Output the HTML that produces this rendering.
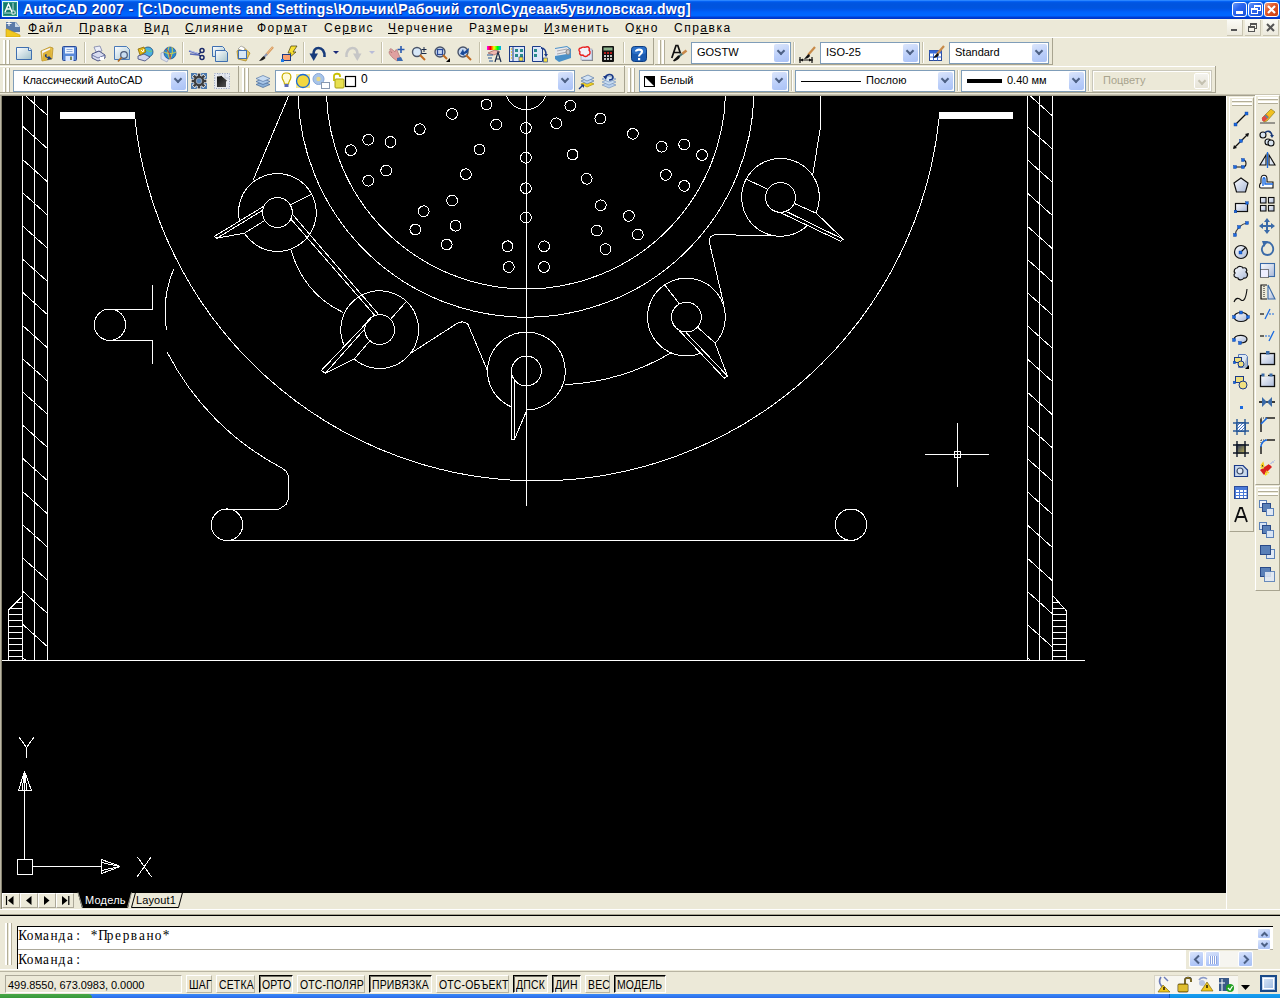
<!DOCTYPE html><html><head><meta charset="utf-8"><style>
*{box-sizing:border-box}
html,body{margin:0;padding:0}
body{width:1280px;height:998px;overflow:hidden;position:relative;background:#ECE9D8;font-family:"Liberation Sans",sans-serif;font-size:11px;color:#000}
.a{position:absolute}
svg.a{overflow:visible}
.combo{position:absolute;border:1px solid #7f9db9;white-space:pre;overflow:hidden}
.ct{position:absolute;top:3px;font-size:11px;line-height:13px}
.dd{position:absolute;right:1px;top:1px;width:15px;bottom:1px;border-radius:2px;background:linear-gradient(160deg,#dce6fb,#b9cdf9 60%,#aac2f6)}
.dd:after{content:"";position:absolute;left:4px;top:4px;width:4px;height:4px;border-right:2px solid #4d6185;border-bottom:2px solid #4d6185;transform:rotate(45deg)}
.dd.dis{background:linear-gradient(#f4f3ee,#e6e3d6);border:1px solid #fff;right:2px;top:2px;bottom:2px}
.dd.dis:after{border-color:#c4c1b0}
.gv{position:absolute;width:3px;border-left:2px solid #fff;border-right:1px solid #b3ae98}
.sv{position:absolute;width:2px;border-left:1px solid #c5c1ab;border-right:1px solid #fff}
.tbe{position:absolute;border-right:1px solid #a8a490;border-bottom:1px solid #a8a490}
.mi u{text-decoration:underline;text-underline-offset:1px;text-decoration-thickness:1px}
.mi{position:absolute;top:21px;font-size:12px;letter-spacing:1.5px;line-height:14px;white-space:pre}
.ub{position:absolute;width:1px;height:10px;background:#000}
.sb{position:absolute;top:975px;height:18px;font-size:12px;line-height:15px;padding-top:1px;text-align:center;white-space:pre;letter-spacing:0.2px}
.sb.up{border-top:1px solid #fff;border-left:1px solid #fff;border-right:1px solid #b8b4a0;border-bottom:1px solid #b8b4a0}
.sb.dn{border-top:1px solid #000;border-left:1px solid #000;border-right:1px solid #fff;border-bottom:1px solid #fff;box-shadow:inset 1px 1px 0 #716f64;padding-top:1px}
</style></head><body><div class="a" style="left:0;top:0;width:1280px;height:19px;background:linear-gradient(#4a9eff 0px,#0a6cff 1px,#0058e8 2px,#0054df 4px,#0055df 8px,#0058ee 10px,#0062fb 12px,#0066ff 14px,#0066ff 16px,#003fd6 17px,#0035c8 19px)"></div><div class="a" style="left:0;top:0;width:1px;height:19px;background:#0030b8"></div><svg class="a" style="left:2px;top:1px" width="16" height="16" viewBox="0 0 16 16"><rect x="0.5" y="0.5" width="15" height="15" fill="#2a9a88" stroke="#e8fff8"/><rect x="2" y="2" width="12" height="12" fill="#1a7a6a"/><path d="M3 11L6.5 3L10 11M4.5 8H8.5" stroke="#fff" stroke-width="1.4" fill="none"/><path d="M11 2V14M2 12H14" stroke="#dff" stroke-width="0.8"/><rect x="10" y="10" width="3" height="3" fill="#1a7a6a" stroke="#fff" stroke-width="0.8"/></svg><div class="a" style="left:23px;top:1px;color:#fff;font-weight:bold;font-size:14px;letter-spacing:0.33px;text-shadow:1px 1px 0 #0a2a9a;white-space:pre;line-height:17px">AutoCAD 2007 - [C:\Documents and Settings\Юльчик\Рабочий стол\Судеаак5увиловская.dwg]</div><div class="a" style="left:1232px;top:2px;width:15px;height:15px;border:1px solid #fff;border-radius:3px;background:linear-gradient(135deg,#6a9af8,#2a66f0 40%,#1850d8)"></div><div class="a" style="left:1248px;top:2px;width:15px;height:15px;border:1px solid #fff;border-radius:3px;background:linear-gradient(135deg,#6a9af8,#2a66f0 40%,#1850d8)"></div><div class="a" style="left:1264px;top:2px;width:15px;height:15px;border:1px solid #fff;border-radius:3px;background:linear-gradient(135deg,#f0a080,#e05828 40%,#c83c10)"></div><div class="a" style="left:1236px;top:11px;width:7px;height:3px;background:#fff"></div><div class="a" style="left:1254px;top:5px;width:7px;height:6px;border:1px solid #fff;border-top-width:2px"></div><div class="a" style="left:1251px;top:8px;width:7px;height:6px;border:1px solid #fff;border-top-width:2px;background:#2a62e8"></div><svg class="a" style="left:1264px;top:2px" width="15" height="15"><path d="M4 4L11 11M11 4L4 11" stroke="#fff" stroke-width="2.2"/></svg><div class="a" style="left:0;top:19px;width:1280px;height:1px;background:#fbf6e2"></div><svg class="a" style="left:5px;top:20px" width="16" height="17" viewBox="0 0 16 17"><path d="M1 2H11L15 7V12H1Z" fill="#5a7aa8"/><path d="M10 2L15 7H10Z" fill="#c8d8e8"/><path d="M2 9L15 15V17H1V9Z" fill="#f0c820" stroke="#c89810" stroke-width="0.6"/><path d="M4 1V6M1.5 3.5H6.5" stroke="#fff" stroke-width="1"/></svg><span class="mi" style="left:28px"><u>Ф</u>айл</span><span class="mi" style="left:79px"><u>П</u>равка</span><span class="mi" style="left:144px"><u>В</u>ид</span><span class="mi" style="left:185px"><u>С</u>лияние</span><span class="mi" style="left:257px">Фор<u>м</u>ат</span><span class="mi" style="left:324px">Се<u>р</u>вис</span><span class="mi" style="left:388px"><u>Ч</u>ерчение</span><span class="mi" style="left:469px">Ра<u>з</u>меры</span><span class="mi" style="left:544px"><u>И</u>зменить</span><span class="mi" style="left:625px">О<u>к</u>но</span><span class="mi" style="left:674px">Спр<u>а</u>вка</span><div class="a" style="left:1227px;top:20px;width:16px;height:16px;background:linear-gradient(#fbfbf6,#ece9dc);border-right:1px solid #c9c5b2;border-bottom:1px solid #c9c5b2"></div><div class="a" style="left:1245px;top:20px;width:16px;height:16px;background:linear-gradient(#fbfbf6,#ece9dc);border-right:1px solid #c9c5b2;border-bottom:1px solid #c9c5b2"></div><div class="a" style="left:1263px;top:20px;width:16px;height:16px;background:linear-gradient(#fbfbf6,#ece9dc);border-right:1px solid #c9c5b2;border-bottom:1px solid #c9c5b2"></div><div class="a" style="left:1231px;top:29px;width:6px;height:2px;background:#555"></div><div class="a" style="left:1250px;top:23px;width:7px;height:6px;border:1px solid #555;border-top-width:2px"></div><div class="a" style="left:1248px;top:26px;width:7px;height:6px;border:1px solid #555;border-top-width:2px;background:#f4f2ea"></div><svg class="a" style="left:1263px;top:20px" width="16" height="16"><path d="M4 4L11 11M11 4L4 11" stroke="#555" stroke-width="2"/></svg><div class="a" style="left:0;top:37px;width:1280px;height:1px;background:#fff"></div><div class="tbe" style="left:0;top:38px;width:654px;height:27px"></div><div class="tbe" style="left:655px;top:38px;width:398px;height:27px"></div><div class="gv" style="left:3px;top:40px;height:24px"></div><div class="gv" style="left:7px;top:40px;height:24px"></div><svg class="a" style="left:16px;top:46px" width="16" height="16" viewBox="0 0 16 16"><defs><linearGradient id="gnew" x1="0" y1="0" x2="1" y2="1"><stop offset="0" stop-color="#fff"/><stop offset="1" stop-color="#9fbfca"/></linearGradient></defs><path d="M0.5 1.5H13L15.5 4V13.5H0.5Z" fill="url(#gnew)" stroke="#3f6fb0"/><path d="M12.5 1.5V4.5H15.5" fill="#fff" stroke="#3f6fb0"/></svg><svg class="a" style="left:39px;top:46px" width="16" height="16" viewBox="0 0 16 16"><path d="M2 5L11 1L14 2L13 13L3 15Z" fill="#e8c04a" stroke="#b8902a" stroke-width="0.8"/><path d="M3 5L11 2L12 9L4 12Z" fill="#f6f6ff"/><path d="M4 7L12 3L13 12L4 15Z" fill="#ddb23a"/><path d="M7 8C5 9 6 12 9 12L8 14L13 13L10 10L9 11C7 11 7 9 8 9Z" fill="#1a3a7a"/></svg><svg class="a" style="left:62px;top:46px" width="16" height="16" viewBox="0 0 16 16"><rect x="0.5" y="0.5" width="14" height="14" rx="1" fill="#5a8ad8" stroke="#2a4a98"/><rect x="3" y="1.5" width="9" height="6" fill="#eef4ff"/><path d="M4.5 3.5H10.5M4.5 5.5H10.5" stroke="#7a9ad0" stroke-width="0.8"/><rect x="3.5" y="10" width="8" height="5" fill="#dde8ff"/><rect x="8" y="10.5" width="2" height="3.5" fill="#7a8a5a"/></svg><svg class="a" style="left:91px;top:46px" width="16" height="16" viewBox="0 0 16 16"><path d="M3 1L9 0L11 5L5 6Z" fill="#eceef8" stroke="#7a82a8" stroke-width="0.8"/><path d="M1 8L8 5L14 9L14 12L7 15L1 12Z" fill="#d8dcf0" stroke="#3a4478" stroke-width="0.9"/><path d="M1 9L7 12L14 9" fill="none" stroke="#5a6498" stroke-width="0.8"/><rect x="9" y="11" width="4" height="3" fill="#fff"/></svg><svg class="a" style="left:114px;top:46px" width="16" height="16" viewBox="0 0 16 16"><defs><linearGradient id="gpv" x1="0" y1="0" x2="1" y2="1"><stop offset="0" stop-color="#fff"/><stop offset="1" stop-color="#a8c6d4"/></linearGradient></defs><path d="M0.5 0.5H12.5L15.5 3.5V13.5H0.5Z" fill="url(#gpv)" stroke="#4a7ab8"/><circle cx="10" cy="9" r="3.3" fill="#c8dcf0" stroke="#4a5a78" stroke-width="1.2"/><path d="M7.5 11.5L4 15.5" stroke="#b06a20" stroke-width="1.8"/></svg><svg class="a" style="left:137px;top:46px" width="16" height="16" viewBox="0 0 16 16"><circle cx="11" cy="6" r="5" fill="#4ab0e0" stroke="#1a4a78" stroke-width="0.8"/><path d="M8 3C10 5 13 6 15 5" stroke="#7ad060" fill="none"/><path d="M1 10L7 8L13 11L8 15L1 13Z" fill="#d0d6ee" stroke="#3a4478" stroke-width="0.8"/><path d="M1 3L7 1L9 6L3 9Z" fill="#e0b818" stroke="#8a6a08" stroke-width="0.8"/><path d="M4 4L6 6L7 3" stroke="#fff" fill="none"/></svg><svg class="a" style="left:160px;top:46px" width="16" height="16" viewBox="0 0 16 16"><path d="M1 7L7 5L9 12L7 16L1 13Z" fill="#dde2f2" stroke="#9aa2c0" stroke-width="0.7"/><circle cx="10" cy="7" r="6" fill="#2a8ad0" stroke="#1a4a88" stroke-width="0.7"/><path d="M4 6C8 8 12 8 16 6M9 1C7 6 8 10 10 13M12 1C13 5 12 10 10 13" stroke="#e8d838" fill="none" stroke-width="0.9"/><path d="M6 3C9 6 11 9 10 13" stroke="#d03a2a" fill="none" stroke-width="1"/></svg><svg class="a" style="left:189px;top:46px" width="16" height="16" viewBox="0 0 16 16"><path d="M0 5L10 8M1 8L10 9" stroke="#5a6ab8" stroke-width="1.4"/><path d="M0.5 4.5L9 7.5" stroke="#c8d0f0" stroke-width="0.8"/><circle cx="13" cy="4.5" r="2" fill="none" stroke="#1a2a6a" stroke-width="1.5"/><circle cx="13" cy="11.5" r="2" fill="none" stroke="#1a2a6a" stroke-width="1.5"/><path d="M10 8L12 6M10 9L12 10" stroke="#1a2a6a" stroke-width="1.3"/></svg><svg class="a" style="left:212px;top:46px" width="16" height="16" viewBox="0 0 16 16"><defs><linearGradient id="gcp" x1="0" y1="0" x2="1" y2="1"><stop offset="0" stop-color="#fff"/><stop offset="1" stop-color="#a6c4cc"/></linearGradient></defs><path d="M0.5 0.5H10.5L12.5 2.5V10.5H0.5Z" fill="url(#gcp)" stroke="#3f6fb0"/><path d="M3.5 4.5H13.5L15.5 6.5V15.5H3.5Z" fill="url(#gcp)" stroke="#3f6fb0"/></svg><svg class="a" style="left:235px;top:46px" width="16" height="16" viewBox="0 0 16 16"><path d="M2 5L8 1L15 7L11 15L3 13Z" fill="#e8c85a" stroke="#a8882a" stroke-width="0.8"/><path d="M3 3L6 0L10 2L9 5Z" fill="#fff" stroke="#888" stroke-width="0.6"/><rect x="3.5" y="4.5" width="8" height="8" fill="#d8e8f4" stroke="#3f6fb0"/></svg><svg class="a" style="left:258px;top:46px" width="16" height="16" viewBox="0 0 16 16"><path d="M15 1L8 9" stroke="#d89858" stroke-width="2.4"/><path d="M14.5 1.2L8 9" stroke="#f0c8a0" stroke-width="0.8"/><path d="M9 8L6 11" stroke="#8a98b8" stroke-width="2"/><path d="M6 10C4 11 2 14 1 15C3 15 6 14 7.5 12Z" fill="#1a1a1a"/></svg><svg class="a" style="left:281px;top:46px" width="16" height="16" viewBox="0 0 16 16"><path d="M10 0H16L12 6H15L8 12L10 7H7Z" fill="#f8e030" stroke="#403810" stroke-width="0.7"/><rect x="1.5" y="8.5" width="8" height="6" fill="#f8a070" stroke="#1a3a88"/><rect x="0" y="13" width="3" height="3" fill="#1a7ae8"/></svg><svg class="a" style="left:310px;top:46px" width="16" height="16" viewBox="0 0 16 16"><path d="M14.5 11C15 5 12 2 8.5 2C5 2 3.5 5 3.5 8" stroke="#173a7a" stroke-width="2.6" fill="none"/><path d="M-0.5 7.5H8L3.7 15Z" fill="#173a7a"/></svg><svg class="a" style="left:345px;top:46px" width="16" height="16" viewBox="0 0 16 16"><path d="M1.5 11C1 5 4 2 7.5 2C11 2 12.5 5 12.5 8" stroke="#c6c6c6" stroke-width="2.6" fill="none"/><path d="M16.5 7.5H8L12.3 15Z" fill="#c6c6c6"/></svg><svg class="a" style="left:388px;top:46px" width="16" height="16" viewBox="0 0 16 16"><path d="M2 3C3 2 5 4 7 6C7 4 8 3 9 4L11 9L13 13L9 15L5 12C3 10 1 8 1 6C1 5 2 5 4 7C3 5 1 4 2 3Z" fill="#e0a0a0" stroke="#a86a6a" stroke-width="0.6"/><path d="M9 12L13 11L15 15H9Z" fill="#3a6ab0"/><path d="M13 0V7M9.5 3.5H16.5" stroke="#2a5ab0" stroke-width="1.6"/></svg><svg class="a" style="left:411px;top:46px" width="16" height="16" viewBox="0 0 16 16"><circle cx="6" cy="6" r="4.5" fill="#d8e8f8" stroke="#4a5468" stroke-width="1.4"/><path d="M9 9L14 14" stroke="#c06a20" stroke-width="2"/><path d="M13 1V6M10.5 3.5H15.5M10.5 7.5H15.5" stroke="#1a2a48" stroke-width="1"/></svg><svg class="a" style="left:434px;top:46px" width="16" height="16" viewBox="0 0 16 16"><circle cx="6" cy="6" r="5" fill="#c8d8f0" stroke="#4a5468" stroke-width="1.4"/><rect x="3.5" y="3.5" width="5" height="5" fill="none" stroke="#2a4a98" stroke-width="1.2"/><path d="M9 9L13 13" stroke="#c06a20" stroke-width="2"/><path d="M16 12V16H12Z" fill="#000"/></svg><svg class="a" style="left:457px;top:46px" width="16" height="16" viewBox="0 0 16 16"><circle cx="6" cy="6" r="5" fill="#c8d8f0" stroke="#4a5468" stroke-width="1.4"/><path d="M3 8L6 3L7 6L12 2C12 5 10 8 7 8L8 10Z" fill="#1a4a98"/><path d="M9 9L14 14" stroke="#c06a20" stroke-width="2"/></svg><svg class="a" style="left:486px;top:46px" width="16" height="16" viewBox="0 0 16 16"><rect x="1" y="0" width="14" height="4" fill="url(#grain)"/><defs><linearGradient id="grain"><stop offset="0" stop-color="#f0f"/><stop offset=".25" stop-color="#f00"/><stop offset=".5" stop-color="#ff0"/><stop offset=".75" stop-color="#0f0"/><stop offset="1" stop-color="#0af"/></linearGradient></defs><path d="M2 7L9 4L14 6L8 9Z" fill="#f0b8b0" stroke="#8a4a4a" stroke-width="0.6"/><path d="M1 9H7M2 12H6M3 15H7" stroke="#2a5a98" stroke-width="1.2"/><path d="M9 16L12 6L15 16M10 13H14" stroke="#1a2a48" stroke-width="1.2" fill="none"/></svg><svg class="a" style="left:509px;top:46px" width="16" height="16" viewBox="0 0 16 16"><rect x="0.5" y="0.5" width="15" height="15" fill="#dde6f8" stroke="#1a3a88"/><path d="M4 1V15" stroke="#1a3a88"/><path d="M2 3H3M2 6H3M2 9H3M2 12H3" stroke="#e8c020" stroke-width="1.4"/><rect x="6" y="3" width="3" height="3" fill="#2a8a8a"/><rect x="11" y="3" width="3" height="3" fill="#2a8a8a"/><rect x="6" y="8" width="3" height="3" fill="#2a8a8a"/><rect x="11" y="8" width="3" height="3" fill="#2a8a8a"/><rect x="10" y="11" width="4" height="4" fill="#f8e040" stroke="#1a3a88" stroke-width="0.6"/></svg><svg class="a" style="left:532px;top:46px" width="16" height="16" viewBox="0 0 16 16"><path d="M0.5 0.5H8.5L10.5 2.5V15.5H0.5Z" fill="#dde6f8" stroke="#1a3a88"/><rect x="2" y="3" width="3" height="3" fill="#2a8a8a"/><rect x="2" y="8" width="3" height="3" fill="#2a8a8a"/><path d="M9 2C12 2 14 4 14 9" stroke="#1a3a88" fill="none" stroke-width="1.4"/><path d="M12 8L14 11L16 8Z" fill="#1a3a88"/><rect x="11.5" y="12" width="4" height="4" fill="#f8e040" stroke="#1a3a88" stroke-width="0.6"/></svg><svg class="a" style="left:555px;top:46px" width="16" height="16" viewBox="0 0 16 16"><path d="M0 2L12 0L16 3V12L4 16L0 13Z" fill="#4a90c8"/><path d="M0 3L12 1L15 4L12 8L0 10Z" fill="#e8e8ea"/><path d="M2 5L12 3M2 8L12 6" stroke="#a8a8b0" stroke-width="1"/><ellipse cx="13" cy="6" rx="2" ry="2.5" fill="#c8c8cc" stroke="#888"/></svg><svg class="a" style="left:578px;top:46px" width="16" height="16" viewBox="0 0 16 16"><rect x="4" y="4" width="11" height="11" fill="#888"/><rect x="3" y="3" width="11" height="11" fill="#dde6f8" stroke="#8a94b0" stroke-width="0.6"/><path d="M3 2C5 0 7 2 8 1C11 0 12 3 11 4C13 6 12 9 10 9C9 11 6 11 5 9C2 10 1 7 2 6C0 4 1 2 3 2Z" fill="#f0f0f8" stroke="#e82020" stroke-width="1.4"/></svg><svg class="a" style="left:601px;top:46px" width="16" height="16" viewBox="0 0 16 16"><rect x="1" y="0" width="12" height="16" rx="1" fill="#101010"/><rect x="2.5" y="1.5" width="9" height="3" fill="#8ab08a"/><path d="M3 7H5M6 7H8M9 7H11" stroke="#e82020" stroke-width="1.6"/><path d="M3 10H5M6 10H8M9 10H11M3 13H5M6 13H8M9 13H11" stroke="#fff" stroke-width="1.6"/></svg><svg class="a" style="left:631px;top:46px" width="16" height="16" viewBox="0 0 16 16"><rect x="0.5" y="0.5" width="15" height="15" rx="3" fill="#1a5ab0" stroke="#0a3a80"/><rect x="1" y="1" width="14" height="7" rx="3" fill="#3a80d8" opacity=".6"/><path d="M5 5.5C5 3 11 3 11 5.5C11 8 8 8 8 10.5" stroke="#fff" stroke-width="2.2" fill="none"/><rect x="7" y="12" width="2.2" height="2.2" fill="#fff"/></svg><div class="sv" style="left:84px;top:42px;height:21px"></div><div class="sv" style="left:182px;top:42px;height:21px"></div><div class="sv" style="left:303px;top:42px;height:21px"></div><div class="sv" style="left:381px;top:42px;height:21px"></div><div class="sv" style="left:479px;top:42px;height:21px"></div><div class="sv" style="left:623px;top:42px;height:21px"></div><svg class="a" style="left:333px;top:51px" width="7" height="4"><path d="M0 0H6L3 3Z" fill="#1a2a78"/></svg><svg class="a" style="left:369px;top:51px" width="7" height="4"><path d="M0 0H6L3 3Z" fill="#b8bcd8"/></svg><div class="gv" style="left:658px;top:40px;height:24px"></div><div class="gv" style="left:662px;top:40px;height:24px"></div><svg class="a" style="left:670px;top:46px" width="16" height="16" viewBox="0 0 16 16"><path d="M1.8 12L6 -0.5H7.8L10.5 7.5M3.8 6.5H10" stroke="#101010" stroke-width="1.7" fill="none"/><path d="M16.5 4.5L12 8" stroke="#c88848" stroke-width="2.6"/><path d="M12.3 7.8L9 10.5" stroke="#4a7a7a" stroke-width="2"/><path d="M9.5 9.5L8 9.5L3 14.5L4 15.5C6.5 15 9 13 10 11Z" fill="#101010"/></svg><div class="combo" style="left:691px;top:42px;width:100px;height:22px;background:#fff;border-color:#7f9db9"><span class="ct" style="left:5px;color:#000">GOSTW</span><div class="dd"></div></div><div class="sv" style="left:793px;top:42px;height:21px"></div><svg class="a" style="left:799px;top:46px" width="16" height="16" viewBox="0 0 16 16"><path d="M0 14H14M1 11V17M13 11V17" stroke="#101010" stroke-width="1.2"/><path d="M1 14L4 12.5V15.5ZM13 14L10 12.5V15.5Z" fill="#101010"/><path d="M16 1L9 9" stroke="#c88a48" stroke-width="2.2"/><path d="M10 8C8 9 6 12 5 13C7 13 10 12 11 10Z" fill="#101010"/></svg><div class="combo" style="left:820px;top:42px;width:100px;height:22px;background:#fff;border-color:#7f9db9"><span class="ct" style="left:5px;color:#000">ISO-25</span><div class="dd"></div></div><div class="sv" style="left:922px;top:42px;height:21px"></div><svg class="a" style="left:928px;top:46px" width="16" height="16" viewBox="0 0 16 16"><rect x="1.5" y="4.5" width="12" height="10" fill="#fff" stroke="#2a4a98"/><rect x="1.5" y="4.5" width="12" height="3" fill="#3a6ad8"/><path d="M5.5 7.5V14.5M9.5 7.5V14.5M1.5 11H13.5" stroke="#3a6ad8"/><path d="M16 0L9 8" stroke="#c88a48" stroke-width="2.2"/><path d="M10 7C8 8 6 11 5 12C7 12 10 11 11 9Z" fill="#101010"/></svg><div class="combo" style="left:949px;top:42px;width:100px;height:22px;background:#fff;border-color:#7f9db9"><span class="ct" style="left:5px;color:#000">Standard</span><div class="dd"></div></div><div class="a" style="left:0;top:66px;width:1216px;height:1px;background:#fff"></div><div class="tbe" style="left:0;top:66px;width:239px;height:27px"></div><div class="tbe" style="left:239px;top:66px;width:386px;height:27px"></div><div class="tbe" style="left:627px;top:66px;width:589px;height:27px"></div><div class="gv" style="left:3px;top:68px;height:24px"></div><div class="gv" style="left:7px;top:68px;height:24px"></div><div class="combo" style="left:13px;top:70px;width:175px;height:22px;background:#fff;border-color:#7f9db9"><span class="ct" style="left:9px;color:#000">Классический AutoCAD</span><div class="dd"></div></div><svg class="a" style="left:191px;top:73px" width="16" height="16" viewBox="0 0 16 16"><rect x="0" y="0" width="16" height="16" fill="#4a78ac"/><path d="M15.43 6.42 L15.43 9.58 L13.27 9.17 L12.55 10.90 L14.37 12.14 L12.14 14.37 L10.90 12.55 L9.17 13.27 L9.58 15.43 L6.42 15.43 L6.83 13.27 L5.10 12.55 L3.86 14.37 L1.63 12.14 L3.45 10.90 L2.73 9.17 L0.57 9.58 L0.57 6.42 L2.73 6.83 L3.45 5.10 L1.63 3.86 L3.86 1.63 L5.10 3.45 L6.83 2.73 L6.42 0.57 L9.58 0.57 L9.17 2.73 L10.90 3.45 L12.14 1.63 L14.37 3.86 L12.55 5.10 L13.27 6.83Z" fill="#fff" stroke="#fff" stroke-width="1.2"/><path d="M15.43 6.42 L15.43 9.58 L13.27 9.17 L12.55 10.90 L14.37 12.14 L12.14 14.37 L10.90 12.55 L9.17 13.27 L9.58 15.43 L6.42 15.43 L6.83 13.27 L5.10 12.55 L3.86 14.37 L1.63 12.14 L3.45 10.90 L2.73 9.17 L0.57 9.58 L0.57 6.42 L2.73 6.83 L3.45 5.10 L1.63 3.86 L3.86 1.63 L5.10 3.45 L6.83 2.73 L6.42 0.57 L9.58 0.57 L9.17 2.73 L10.90 3.45 L12.14 1.63 L14.37 3.86 L12.55 5.10 L13.27 6.83Z" fill="#3c3c3c"/><circle cx="8" cy="8" r="2.8" fill="#5a88bc" stroke="#ccc" stroke-width="0.6"/></svg><svg class="a" style="left:214px;top:73px" width="16" height="16" viewBox="0 0 16 16"><rect x="0" y="0" width="16" height="16" fill="#e4e8f0"/><path d="M0.5 0.5H15.5V15.5H0.5Z" fill="none" stroke="#9aa4b8" stroke-dasharray="1 1.5"/><path d="M5 0V16M11 0V16M0 5H16" stroke="#b8c0d0" stroke-width="0.7"/><defs><linearGradient id="ghm" x1="0" y1="0" x2="1" y2="1"><stop offset="0" stop-color="#0a0a0a"/><stop offset="1" stop-color="#5a5a5a"/></linearGradient></defs><path d="M2.5 14.5V3H4.5L7.5 2.5L14.5 8.5H12.5V14.5Z" fill="url(#ghm)" stroke="#fff" stroke-width="0.8"/></svg><div class="gv" style="left:242px;top:68px;height:24px"></div><div class="gv" style="left:246px;top:68px;height:24px"></div><svg class="a" style="left:255px;top:73px" width="16" height="16" viewBox="0 0 16 16"><path d="M1 11.5L8 8.5L15 11.5L8 14.5Z" fill="#8ab0d8" stroke="#4a6a98" stroke-width="0.7"/><path d="M1 8.5L8 5.5L15 8.5L8 11.5Z" fill="#a8c6e8" stroke="#4a6a98" stroke-width="0.7"/><path d="M1 5.5L8 2.5L15 5.5L8 8.5Z" fill="#c8dcf2" stroke="#5a7aa8" stroke-width="0.7"/></svg><div class="combo" style="left:275px;top:70px;width:300px;height:22px;background:#fff;border-color:#7f9db9"><svg class="a" style="left:4px;top:1px" width="90" height="17" viewBox="0 0 90 17"><path d="M5.5 1C2.5 1 1.5 4 2.5 7C3.5 9 4.5 10 4.5 12H8.5C8.5 10 9.5 9 10.5 7C11.5 4 10.5 1 7.5 1Z" fill="#fffbd8" stroke="#c8b000" stroke-width="1.2"/><rect x="4.5" y="12" width="4" height="3" fill="#5a6ab8"/><rect x="16" y="2" width="14" height="14" fill="#f0d840" opacity=".6"/><circle cx="23" cy="9" r="6.5" fill="#f2d840" stroke="#1a6ad8" stroke-width="1.3"/><circle cx="38.5" cy="7" r="5.5" fill="#a8c4e8" stroke="#88a8d8"/><circle cx="38.5" cy="7" r="2.2" fill="#e8d888"/><rect x="41.5" y="10.5" width="8" height="6" fill="#fff" stroke="#8898b0"/><path d="M54 9V4C54 1 60 1 60 4V5" stroke="#c8c000" stroke-width="1.8" fill="none"/><rect x="55" y="7" width="9" height="9" rx="1" fill="#e8e050" stroke="#a8a010"/><rect x="65.5" y="4.5" width="10" height="10" fill="#fff" stroke="#000" stroke-width="1.2"/></svg><span class="a" style="left:85px;top:2px;font-size:12px;line-height:13px">0</span><span class="ct" style="left:5px;color:#000"></span><div class="dd"></div></div><svg class="a" style="left:578px;top:73px" width="16" height="16" viewBox="0 0 16 16"><path d="M3 11L10 8L16 11L9 14Z" fill="#f0d020" stroke="#a89010" stroke-width="0.7"/><path d="M3 8L10 5L16 8L9 11Z" fill="#c0d4ec" stroke="#5a7aa8" stroke-width="0.7"/><path d="M3 5L10 2L16 5L9 8Z" fill="#d4e4f4" stroke="#5a7aa8" stroke-width="0.7"/><path d="M1 16L5 12" stroke="#1a3a88" stroke-width="1.4"/><path d="M2.5 11.5H6V15Z" fill="#1a3a88"/></svg><svg class="a" style="left:601px;top:73px" width="16" height="16" viewBox="0 0 16 16"><path d="M1 12L8 9L15 12L8 15Z" fill="#b8d0ec" stroke="#6a8ab8" stroke-width="0.6"/><path d="M1 9L8 6L15 9L8 12Z" fill="#c8dcf0" stroke="#6a8ab8" stroke-width="0.6"/><path d="M1 6L8 3L15 6L8 9Z" fill="#d8e8f4" stroke="#6a8ab8" stroke-width="0.6"/><path d="M4 5C5 1 11 0 12 4C12 6 10 7 8 7" stroke="#1a3a88" stroke-width="1.6" fill="none"/><path d="M2 3L5 7L6 3Z" fill="#1a3a88"/></svg><div class="gv" style="left:628px;top:68px;height:24px"></div><div class="gv" style="left:632px;top:68px;height:24px"></div><div class="combo" style="left:639px;top:70px;width:150px;height:22px;background:#fff;border-color:#7f9db9"><svg class="a" style="left:4px;top:5px" width="11" height="11"><rect x="0.5" y="0.5" width="10" height="10" fill="#fff" stroke="#000"/><path d="M0 0H11V11Z" fill="#000"/></svg><span class="ct" style="left:20px;color:#000">Белый</span><div class="dd"></div></div><div class="sv" style="left:791px;top:70px;height:21px"></div><div class="combo" style="left:795px;top:70px;width:160px;height:22px;background:#fff;border-color:#7f9db9"><div class="a" style="left:5px;top:10px;width:60px;height:1px;background:#000"></div><span class="ct" style="left:70px;color:#000">Послою</span><div class="dd"></div></div><div class="sv" style="left:957px;top:70px;height:21px"></div><div class="combo" style="left:961px;top:70px;width:125px;height:22px;background:#fff;border-color:#7f9db9"><div class="a" style="left:5px;top:8px;width:35px;height:4px;background:#000"></div><span class="ct" style="left:45px;color:#000">0.40 мм</span><div class="dd"></div></div><div class="sv" style="left:1088px;top:70px;height:21px"></div><div class="combo" style="left:1092px;top:70px;width:120px;height:22px;background:#ece9d8;border-color:#c9c7ba"><div class="a" style="left:0;top:0;right:0;bottom:0;border:1px solid #fff"></div><span class="ct" style="left:10px;color:#a8a48e">Поцвету</span><div class="dd dis"></div></div><div class="a" style="left:0;top:93px;width:1280px;height:3px;background:linear-gradient(#ece9d8 0px,#ece9d8 1px,#c8c4b2 1px,#c8c4b2 2px,#a5a18f 2px)"></div><div class="a" style="left:0;top:96px;width:1px;height:813px;background:#bcb8a5"></div><div class="a" style="left:1px;top:96px;width:1px;height:813px;background:#85816f"></div><div class="a" style="left:2px;top:96px;width:1224px;height:797px;background:#000;overflow:hidden"><svg width="1224" height="797" viewBox="2 96 1224 797" style="position:absolute;left:0;top:0" fill="none" stroke="#fff" stroke-width="1" shape-rendering="crispEdges"><path d="M22.5 96.0 L22.5 660.5"/><path d="M34.5 96.0 L34.5 660.5"/><path d="M47.5 96.0 L47.5 660.5"/><path d="M1027.5 96.0 L1027.5 660.5"/><path d="M1039.5 96.0 L1039.5 660.5"/><path d="M1052.5 96.0 L1052.5 660.5"/><path d="M25.8 96.0 L47.5 115.5"/><path d="M22.5 126.2 L47.5 148.7"/><path d="M22.5 159.4 L47.5 181.9"/><path d="M22.5 192.6 L47.5 215.1"/><path d="M22.5 225.8 L47.5 248.3"/><path d="M22.5 259.0 L47.5 281.5"/><path d="M22.5 292.2 L47.5 314.7"/><path d="M22.5 325.4 L47.5 347.9"/><path d="M22.5 358.6 L47.5 381.1"/><path d="M22.5 391.8 L47.5 414.3"/><path d="M22.5 425.0 L47.5 447.5"/><path d="M22.5 458.2 L47.5 480.7"/><path d="M22.5 491.4 L47.5 513.9"/><path d="M22.5 524.6 L47.5 547.1"/><path d="M22.5 557.8 L47.5 580.3"/><path d="M22.5 591.0 L47.5 613.5"/><path d="M22.5 624.2 L47.5 646.7"/><path d="M22.5 657.4 L25.9 660.5"/><path d="M1030.3 96.0 L1052.5 116.0"/><path d="M1027.5 126.7 L1052.5 149.2"/><path d="M1027.5 159.9 L1052.5 182.4"/><path d="M1027.5 193.1 L1052.5 215.6"/><path d="M1027.5 226.3 L1052.5 248.8"/><path d="M1027.5 259.5 L1052.5 282.0"/><path d="M1027.5 292.7 L1052.5 315.2"/><path d="M1027.5 325.9 L1052.5 348.4"/><path d="M1027.5 359.1 L1052.5 381.6"/><path d="M1027.5 392.3 L1052.5 414.8"/><path d="M1027.5 425.5 L1052.5 448.0"/><path d="M1027.5 458.7 L1052.5 481.2"/><path d="M1027.5 491.9 L1052.5 514.4"/><path d="M1027.5 525.1 L1052.5 547.6"/><path d="M1027.5 558.3 L1052.5 580.8"/><path d="M1027.5 591.5 L1052.5 614.0"/><path d="M1027.5 624.7 L1052.5 647.2"/><path d="M1027.5 657.9 L1030.4 660.5"/><path d="M2.0 660.5 L1085.0 660.5"/><path d="M8.5 660.5 L8.5 610.0 L22.5 595.8"/><path d="M15.9 602.5 L22.5 602.5"/><path d="M10.0 608.5 L22.5 608.5"/><path d="M8.5 614.5 L22.5 614.5"/><path d="M8.5 620.5 L22.5 620.5"/><path d="M8.5 626.5 L22.5 626.5"/><path d="M8.5 632.5 L22.5 632.5"/><path d="M8.5 638.5 L22.5 638.5"/><path d="M8.5 644.5 L22.5 644.5"/><path d="M8.5 650.5 L22.5 650.5"/><path d="M8.5 656.5 L22.5 656.5"/><path d="M1066.0 660.5 L1066.0 610.4 L1052.5 595.4"/><path d="M1052.5 602.5 L1058.9 602.5"/><path d="M1052.5 608.5 L1064.3 608.5"/><path d="M1052.5 614.5 L1066.0 614.5"/><path d="M1052.5 620.5 L1066.0 620.5"/><path d="M1052.5 626.5 L1066.0 626.5"/><path d="M1052.5 632.5 L1066.0 632.5"/><path d="M1052.5 638.5 L1066.0 638.5"/><path d="M1052.5 644.5 L1066.0 644.5"/><path d="M1052.5 650.5 L1066.0 650.5"/><path d="M1052.5 656.5 L1066.0 656.5"/><rect x="60" y="112" width="75" height="7" fill="#fff" stroke="none"/><rect x="939" y="112" width="74" height="7" fill="#fff" stroke="none"/><path d="M135.0 118.6 A404.17 404.17 0 0 0 939.0 118.6"/><circle cx="526.0" cy="89.5" r="199.5"/><circle cx="526.0" cy="89.2" r="228.0"/><circle cx="526.0" cy="89.0" r="20.7"/><path d="M526.5 96.0 L526.5 505.5"/><path d="M239.32 220.44 A38.9 38.9 0 1 1 244.46 233.19"/><circle cx="277.4" cy="212.5" r="14.9"/><path d="M344.40 345.95 A38.9 38.9 0 1 1 354.20 358.98"/><circle cx="379.7" cy="329.6" r="14.9"/><path d="M511.38 406.88 A38.9 38.9 0 1 1 526.11 409.90"/><circle cx="526.4" cy="371.0" r="14.9"/><path d="M700.12 353.50 A38.9 38.9 0 1 1 715.29 343.15"/><circle cx="686.4" cy="317.1" r="14.9"/><path d="M807.61 225.30 A38.9 38.9 0 1 1 816.09 213.11"/><circle cx="780.5" cy="197.4" r="14.9"/><path d="M311.5 194.2 L290.9 204.7"/><path d="M406.2 301.6 L390.7 319.2"/><path d="M664.4 284.5 L679.5 304.0"/><path d="M746.2 179.1 L767.4 189.1"/><path d="M263.6 206.4 L214.3 236.4 L216.9 238.2 L263.1 210.0"/><path d="M216.9 238.2 L244.6 233.1 L264.1 220.9"/><path d="M291.2 219.4 L374.4 315.0"/><path d="M292.6 214.5 L378.9 314.8"/><path d="M373.3 315.9 L321.4 370.4 L325.2 373.4 L365.2 328.5"/><path d="M325.2 373.4 L354.1 359.1 L370.3 340.3"/><path d="M511.7 370.8 L511.7 439.4 L514.4 439.4 L514.4 379.4"/><path d="M514.4 439.4 L526.1 411.9"/><path d="M679.1 330.5 L724.3 378.2 L727.5 376.1 L686.1 332.6"/><path d="M727.5 376.1 L714.9 342.8 L697.7 327.4"/><path d="M779.1 212.0 L840.9 241.3 L843.2 239.2 L786.1 211.4"/><path d="M843.2 239.2 L816.3 213.2 L794.3 203.5"/><path d="M288.6 96.0 L253.1 180.2"/><path d="M291.2 249.6 A93.60 93.60 0 0 0 342.9 312.3"/><path d="M411.1 353L457 323.5Q463 320 467.8 324L487.3 370.3"/><path d="M564.7 384.7 A233.60 233.60 0 0 0 671.7 352.5"/><path d="M724 305.3L709.5 243Q708.5 235 716.5 234.5L770.7 235.9"/><path d="M820.4 96.0 L820.4 127.6 L812.8 174.6"/><circle cx="109.9" cy="324.7" r="15.7"/><path d="M107.0 309.5 L152.5 309.5 L152.5 285.0"/><path d="M107.0 340.5 L152.5 340.5 L152.5 363.8"/><path d="M173.8 268.8 A113.30 113.30 0 0 0 166.5 330.1"/><path d="M167.2 352.2 A269.20 269.20 0 0 0 281.5 467.8"/><path d="M281.5 467.8 L286.0 471.0 L288.5 476.1 L288.5 498.5 L286.0 504.5 L278.4 509.5 L223.7 509.5"/><circle cx="227.0" cy="524.7" r="15.8"/><circle cx="851.0" cy="524.7" r="15.7"/><path d="M223.7 540.5 L851.0 540.5"/><circle cx="486.5" cy="104.5" r="5.4"/><circle cx="452.1" cy="113.9" r="5.4"/><circle cx="496.2" cy="124.5" r="5.4"/><circle cx="419.8" cy="129.2" r="5.4"/><circle cx="525.9" cy="128.0" r="5.4"/><circle cx="368.2" cy="139.7" r="5.4"/><circle cx="390.5" cy="142.0" r="5.4"/><circle cx="350.9" cy="150.2" r="5.4"/><circle cx="479.5" cy="149.5" r="5.4"/><circle cx="525.9" cy="157.7" r="5.4"/><circle cx="386.2" cy="170.6" r="5.4"/><circle cx="368.2" cy="180.7" r="5.4"/><circle cx="465.9" cy="174.2" r="5.4"/><circle cx="525.9" cy="188.2" r="5.4"/><circle cx="452.1" cy="200.6" r="5.4"/><circle cx="423.7" cy="211.2" r="5.4"/><circle cx="525.9" cy="217.5" r="5.4"/><circle cx="455.6" cy="225.7" r="5.4"/><circle cx="415.3" cy="229.5" r="5.4"/><circle cx="446.7" cy="244.5" r="5.4"/><circle cx="507.5" cy="246.3" r="5.4"/><circle cx="508.8" cy="267.0" r="5.4"/><circle cx="570.3" cy="105.7" r="5.4"/><circle cx="600.3" cy="118.6" r="5.4"/><circle cx="556.2" cy="123.3" r="5.4"/><circle cx="632.9" cy="133.8" r="5.4"/><circle cx="661.7" cy="146.7" r="5.4"/><circle cx="684.2" cy="144.4" r="5.4"/><circle cx="702.0" cy="155.0" r="5.4"/><circle cx="572.6" cy="154.5" r="5.4"/><circle cx="665.9" cy="174.9" r="5.4"/><circle cx="684.2" cy="185.9" r="5.4"/><circle cx="586.7" cy="178.8" r="5.4"/><circle cx="600.8" cy="205.3" r="5.4"/><circle cx="628.9" cy="215.9" r="5.4"/><circle cx="596.8" cy="230.6" r="5.4"/><circle cx="637.8" cy="234.6" r="5.4"/><circle cx="605.5" cy="249.1" r="5.4"/><circle cx="544.1" cy="246.3" r="5.4"/><circle cx="544.1" cy="267.0" r="5.4"/><path d="M924.5 454.5 L989.0 454.5"/><path d="M957.5 423.0 L957.5 487.0"/><rect x="954.5" y="451.5" width="6" height="6"/><rect x="17.5" y="859.5" width="15" height="15"/><path d="M24.5 859.5 L24.5 790.5"/><path d="M24.5 771.5 L18.5 790.5 L31.5 790.5 L24.5 771.5"/><path d="M24.5 773.0 L22.0 790.0"/><path d="M24.5 773.0 L27.0 790.0"/><path d="M24.5 773.0 L24.5 790.0"/><path d="M32.5 866.5 L101.5 866.5"/><path d="M120.5 866.5 L101.5 859.5 L101.5 873.5 L120.5 866.5"/><path d="M119.0 866.5 L102.0 862.5"/><path d="M119.0 866.5 L102.0 870.5"/><path d="M19.0 737.0 L26.5 747.5 L34.0 737.0"/><path d="M26.5 747.5 L26.5 758.0"/><path d="M137.5 857.0 L151.5 877.0"/><path d="M151.0 857.0 L137.0 877.0"/></svg></div><div class="a" style="left:1226px;top:96px;width:1px;height:814px;background:#fff"></div><div class="a" style="left:1229px;top:97px;width:25px;height:435px;border-left:1px solid #fff;border-top:1px solid #fff;border-right:1px solid #a8a490;border-bottom:1px solid #a8a490"></div><div class="a" style="left:1232px;top:99px;width:20px;height:3px;border-top:2px solid #fff;border-bottom:1px solid #b3ae98"></div><div class="a" style="left:1232px;top:103px;width:20px;height:3px;border-top:2px solid #fff;border-bottom:1px solid #b3ae98"></div><svg class="a" style="left:1233px;top:111px" width="16" height="16" viewBox="0 0 16 16"><path d="M3 13L13 3" stroke="#101010" stroke-width="1.2"/><rect x="1.0" y="12.0" width="3" height="3" fill="#1a6ae0" stroke="#0a3a98" stroke-width="0.4"/><rect x="12.0" y="1.0" width="3" height="3" fill="#1a6ae0" stroke="#0a3a98" stroke-width="0.4"/></svg><svg class="a" style="left:1233px;top:133px" width="16" height="16" viewBox="0 0 16 16"><path d="M1 15L15 1" stroke="#101010" stroke-width="1.3"/><path d="M0 16L1 12L4 15Z M16 0L12 1L15 4Z" fill="#101010"/><rect x="6.5" y="6.5" width="3" height="3" fill="#1a6ae0" stroke="#0a3a98" stroke-width="0.4"/></svg><svg class="a" style="left:1233px;top:155px" width="16" height="16" viewBox="0 0 16 16"><path d="M2 12H10C14 12 14 5 10 5" stroke="#101010" stroke-width="1.1" fill="none"/><rect x="0.5" y="10.5" width="3" height="3" fill="#1a6ae0" stroke="#0a3a98" stroke-width="0.4"/><rect x="8.5" y="10.5" width="3" height="3" fill="#1a6ae0" stroke="#0a3a98" stroke-width="0.4"/><rect x="8.5" y="3.5" width="3" height="3" fill="#1a6ae0" stroke="#0a3a98" stroke-width="0.4"/></svg><svg class="a" style="left:1233px;top:177px" width="16" height="16" viewBox="0 0 16 16"><defs><linearGradient id="gsh" x1="0" y1="0" x2="1" y2="1"><stop offset="0" stop-color="#fff"/><stop offset="1" stop-color="#a8b8d8"/></linearGradient></defs><path d="M8 1L15 6L12.5 15H3.5L1 6Z" fill="url(#gsh)" stroke="#101010" stroke-width="1.2"/></svg><svg class="a" style="left:1233px;top:199px" width="16" height="16" viewBox="0 0 16 16"><defs><linearGradient id="gsh" x1="0" y1="0" x2="1" y2="1"><stop offset="0" stop-color="#fff"/><stop offset="1" stop-color="#a8b8d8"/></linearGradient></defs><rect x="2.5" y="4.5" width="12" height="8" fill="url(#gsh)" stroke="#101010" stroke-width="1.2"/><rect x="1.2" y="11.2" width="2.6" height="2.6" fill="#1a6ae0" stroke="#0a3a98" stroke-width="0.4"/><rect x="12.7" y="2.7" width="2.6" height="2.6" fill="#1a6ae0" stroke="#0a3a98" stroke-width="0.4"/></svg><svg class="a" style="left:1233px;top:221px" width="16" height="16" viewBox="0 0 16 16"><path d="M2 14C3 8 8 3 14 2" stroke="#404040" stroke-width="1.1" fill="none"/><rect x="0.5" y="12.5" width="3" height="3" fill="#1a6ae0" stroke="#0a3a98" stroke-width="0.4"/><rect x="4.5" y="4.5" width="3" height="3" fill="#1a6ae0" stroke="#0a3a98" stroke-width="0.4"/><rect x="12.5" y="0.5" width="3" height="3" fill="#1a6ae0" stroke="#0a3a98" stroke-width="0.4"/></svg><svg class="a" style="left:1233px;top:243px" width="16" height="16" viewBox="0 0 16 16"><defs><linearGradient id="gsh" x1="0" y1="0" x2="1" y2="1"><stop offset="0" stop-color="#fff"/><stop offset="1" stop-color="#a8b8d8"/></linearGradient></defs><circle cx="8" cy="9" r="6.5" fill="url(#gsh)" stroke="#101010" stroke-width="1.2"/><path d="M8 9L13 4" stroke="#101010" stroke-width="1.1"/><rect x="6.0" y="8.0" width="3" height="3" fill="#1a6ae0" stroke="#0a3a98" stroke-width="0.4"/></svg><svg class="a" style="left:1233px;top:265px" width="16" height="16" viewBox="0 0 16 16"><defs><linearGradient id="gsh" x1="0" y1="0" x2="1" y2="1"><stop offset="0" stop-color="#fff"/><stop offset="1" stop-color="#a8b8d8"/></linearGradient></defs><path d="M4 3C6 0 10 2 10 3C13 2 15 5 13 7C16 9 14 14 11 13C9 16 5 15 5 13C1 13 0 10 2 8C0 6 2 3 4 3Z" fill="url(#gsh)" stroke="#101010" stroke-width="1.2"/></svg><svg class="a" style="left:1233px;top:287px" width="16" height="16" viewBox="0 0 16 16"><path d="M1 15C3 10 6 11 8 13C11 15 13 11 14 2" stroke="#101010" stroke-width="1.1" fill="none"/></svg><svg class="a" style="left:1233px;top:309px" width="16" height="16" viewBox="0 0 16 16"><defs><linearGradient id="gsh" x1="0" y1="0" x2="1" y2="1"><stop offset="0" stop-color="#fff"/><stop offset="1" stop-color="#a8b8d8"/></linearGradient></defs><ellipse cx="8" cy="8" rx="7" ry="4.5" fill="url(#gsh)" stroke="#101010" stroke-width="1.2"/><rect x="6.5" y="2.0" width="3" height="3" fill="#1a6ae0" stroke="#0a3a98" stroke-width="0.4"/><rect x="-0.5" y="6.5" width="3" height="3" fill="#1a6ae0" stroke="#0a3a98" stroke-width="0.4"/><rect x="13.5" y="6.5" width="3" height="3" fill="#1a6ae0" stroke="#0a3a98" stroke-width="0.4"/></svg><svg class="a" style="left:1233px;top:331px" width="16" height="16" viewBox="0 0 16 16"><defs><linearGradient id="gsh" x1="0" y1="0" x2="1" y2="1"><stop offset="0" stop-color="#fff"/><stop offset="1" stop-color="#a8b8d8"/></linearGradient></defs><path d="M1 9C1 3 14 3 14 8C14 12 9 12 7 12" fill="url(#gsh)" stroke="#101010" stroke-width="1.2"/><rect x="-0.5" y="7.5" width="3" height="3" fill="#1a6ae0" stroke="#0a3a98" stroke-width="0.4"/><rect x="5.5" y="10.5" width="3" height="3" fill="#1a6ae0" stroke="#0a3a98" stroke-width="0.4"/></svg><svg class="a" style="left:1233px;top:353px" width="16" height="16" viewBox="0 0 16 16"><path d="M5.5 1.5H12.5L14.5 3.5V14.5H5.5Z" fill="#dde8f2" stroke="#5a7ab8"/><path d="M14 3V15L10 15Z" fill="#a8b8c8"/><rect x="1.5" y="4.5" width="7" height="5" fill="#f0e080" stroke="#1a3a88"/><circle cx="8" cy="11" r="3" fill="#f0e080" stroke="#1a3a88"/><path d="M16 12V16H12Z" fill="#000"/><rect x="0.25" y="8.25" width="2.5" height="2.5" fill="#1a6ae0" stroke="#0a3a98" stroke-width="0.4"/></svg><svg class="a" style="left:1233px;top:375px" width="16" height="16" viewBox="0 0 16 16"><rect x="2.5" y="1.5" width="8" height="6" fill="#f0e080" stroke="#1a3a88"/><circle cx="10" cy="10" r="4" fill="#f0e080" stroke="#1a3a88"/><rect x="0.25" y="6.25" width="2.5" height="2.5" fill="#1a6ae0" stroke="#0a3a98" stroke-width="0.4"/></svg><svg class="a" style="left:1233px;top:397px" width="16" height="16" viewBox="0 0 16 16"><rect x="7" y="9" width="3" height="3" fill="#1a6ae0"/></svg><svg class="a" style="left:1233px;top:419px" width="16" height="16" viewBox="0 0 16 16"><rect x="3.5" y="3.5" width="9" height="9" fill="#fff" stroke="#2a5a98"/><path d="M4 7L7 4M4 10L10 4M5 12L12 5M8 12L12 8" stroke="#4a7ac8" stroke-width="1"/><path d="M0 4H16M0 12H16M4 0V16M12 0V16" stroke="#2a5a98" stroke-width="1.4"/></svg><svg class="a" style="left:1233px;top:441px" width="16" height="16" viewBox="0 0 16 16"><defs><linearGradient id="ggr" x1="0" y1="0" x2="1" y2="1"><stop offset="0" stop-color="#1a2a60"/><stop offset="1" stop-color="#d0c050"/></linearGradient></defs><rect x="3" y="3" width="10" height="10" fill="url(#ggr)"/><path d="M0 4H16M0 12H16M4 0V16M12 0V16" stroke="#101828" stroke-width="1.4"/></svg><svg class="a" style="left:1233px;top:463px" width="16" height="16" viewBox="0 0 16 16"><path d="M1.5 2.5H10L14.5 7V13.5H1.5Z" fill="#c8d8ec" stroke="#1a3a88" stroke-width="1.2"/><circle cx="7" cy="8" r="3" fill="#e0e8f4" stroke="#3a4a68" stroke-width="1.2"/></svg><svg class="a" style="left:1233px;top:485px" width="16" height="16" viewBox="0 0 16 16"><rect x="1.5" y="1.5" width="13" height="12" fill="#4a7ad8" stroke="#2a4a98"/><path d="M3 6H6M7 6H10M11 6H13.5M3 9H6M7 9H10M11 9H13.5M3 12H6M7 12H10M11 12H13.5" stroke="#fff" stroke-width="1.8"/></svg><svg class="a" style="left:1233px;top:507px" width="16" height="16" viewBox="0 0 16 16"><path d="M2 15L7 1H9L14 15M4.5 10H11.5" stroke="#101010" stroke-width="1.8" fill="none"/></svg><div class="a" style="left:1255px;top:95px;width:25px;height:390px;border-left:1px solid #fff;border-top:1px solid #fff;border-right:1px solid #a8a490;border-bottom:1px solid #a8a490"></div><div class="a" style="left:1258px;top:97px;width:20px;height:3px;border-top:2px solid #fff;border-bottom:1px solid #b3ae98"></div><div class="a" style="left:1258px;top:101px;width:20px;height:3px;border-top:2px solid #fff;border-bottom:1px solid #b3ae98"></div><svg class="a" style="left:1259px;top:108px" width="16" height="16" viewBox="0 0 16 16"><path d="M1 15H16" stroke="#404040" stroke-width="1"/><path d="M3 10L12 1L16 4L8 13L5 14Z" fill="#f0c020" stroke="#807020" stroke-width="0.6"/><path d="M3 10L7 6L10 9L6 13C5 14 3 13 3 12Z" fill="#e04848"/><path d="M6 7L9 10" stroke="#40a0a0" stroke-width="1.2"/></svg><svg class="a" style="left:1259px;top:130px" width="16" height="16" viewBox="0 0 16 16"><circle cx="4" cy="5" r="3" fill="#d8e4f0" stroke="#101010" stroke-width="1.1"/><circle cx="9" cy="12" r="3" fill="#d8e4f0" stroke="#101010" stroke-width="1.1"/><circle cx="12" cy="13" r="3" fill="#d8e4f0" stroke="#101010" stroke-width="1.1"/><path d="M6 3C8 0 12 1 13 5" stroke="#1a3a78" stroke-width="1.6" fill="none"/><path d="M11 5H15L13 8Z" fill="#1a3a78"/></svg><svg class="a" style="left:1259px;top:152px" width="16" height="16" viewBox="0 0 16 16"><path d="M7 3V13H1Z M10 3V13H16Z" fill="#dde6f2" stroke="#101010" stroke-width="1.1"/><path d="M8.5 0V16" stroke="#1a6ae0" stroke-width="1.3"/></svg><svg class="a" style="left:1259px;top:174px" width="16" height="16" viewBox="0 0 16 16"><path d="M2 14C0 14 0 10 2 9V5C2 0 8 0 8 5V8H14V14Z" fill="#fff" stroke="#101010" stroke-width="1.1"/><path d="M4 12V6C4 3 6 3 6 6V10H14" stroke="#1a6ae0" stroke-width="1.4" fill="none"/></svg><svg class="a" style="left:1259px;top:196px" width="16" height="16" viewBox="0 0 16 16"><defs><linearGradient id="gsh" x1="0" y1="0" x2="1" y2="1"><stop offset="0" stop-color="#fff"/><stop offset="1" stop-color="#a8b8d8"/></linearGradient></defs><rect x="1.5" y="1.5" width="5.5" height="5.5" fill="url(#gsh)" stroke="#101010" stroke-width="1.1"/><rect x="9.5" y="1.5" width="5.5" height="5.5" fill="url(#gsh)" stroke="#101010" stroke-width="1.1"/><rect x="1.5" y="9.5" width="5.5" height="5.5" fill="url(#gsh)" stroke="#101010" stroke-width="1.1"/><rect x="9.5" y="9.5" width="5.5" height="5.5" fill="url(#gsh)" stroke="#101010" stroke-width="1.1"/></svg><svg class="a" style="left:1259px;top:218px" width="16" height="16" viewBox="0 0 16 16"><path d="M8 0L11 4H9V7H12V5L16 8L12 11V9H9V12H11L8 16L5 12H7V9H4V11L0 8L4 5V7H7V4H5Z" fill="#3a6aa8"/></svg><svg class="a" style="left:1259px;top:240px" width="16" height="16" viewBox="0 0 16 16"><path d="M5 5C1 8 3 15 8.5 15C13 15 16 10 13 5C11 2 8 2 6 3" stroke="#3a6aa8" stroke-width="1.8" fill="none"/><path d="M3 1L9 1L5 7Z" fill="#3a6aa8"/></svg><svg class="a" style="left:1259px;top:262px" width="16" height="16" viewBox="0 0 16 16"><defs><linearGradient id="gsh" x1="0" y1="0" x2="1" y2="1"><stop offset="0" stop-color="#fff"/><stop offset="1" stop-color="#a8b8d8"/></linearGradient></defs><rect x="1.5" y="1.5" width="14" height="13" fill="url(#gsh)" stroke="#3a6aa8" stroke-width="1.1"/><rect x="1.5" y="7.5" width="8" height="8" fill="#eef" stroke="#101010" stroke-dasharray="1 1"/></svg><svg class="a" style="left:1259px;top:284px" width="16" height="16" viewBox="0 0 16 16"><defs><linearGradient id="gsh" x1="0" y1="0" x2="1" y2="1"><stop offset="0" stop-color="#fff"/><stop offset="1" stop-color="#a8b8d8"/></linearGradient></defs><path d="M8 1H2V15H8" stroke="#101010" stroke-width="1.2" fill="none"/><path d="M5 2V14" stroke="#101010" stroke-dasharray="1 1"/><path d="M9 1L16 15H9Z" fill="url(#gsh)" stroke="#3a6aa8" stroke-width="1.1"/></svg><svg class="a" style="left:1259px;top:306px" width="16" height="16" viewBox="0 0 16 16"><path d="M1 8H5" stroke="#101010" stroke-width="1.2"/><path d="M10 8H16" stroke="#1a6ae0" stroke-width="1.2" stroke-dasharray="2 1"/><path d="M6 13L11 3" stroke="#1a6ae0" stroke-width="1.3"/></svg><svg class="a" style="left:1259px;top:328px" width="16" height="16" viewBox="0 0 16 16"><path d="M1 8H5" stroke="#101010" stroke-width="1.2"/><path d="M6 8H11" stroke="#1a6ae0" stroke-width="1.2" stroke-dasharray="2 1"/><path d="M10 13L15 3" stroke="#1a6ae0" stroke-width="1.3"/></svg><svg class="a" style="left:1259px;top:350px" width="16" height="16" viewBox="0 0 16 16"><defs><linearGradient id="gsh" x1="0" y1="0" x2="1" y2="1"><stop offset="0" stop-color="#fff"/><stop offset="1" stop-color="#a8b8d8"/></linearGradient></defs><rect x="1.5" y="3.5" width="14" height="11" fill="url(#gsh)" stroke="#101010" stroke-width="1.3"/><rect x="7" y="1" width="3.5" height="3.5" fill="#3a6aa8"/></svg><svg class="a" style="left:1259px;top:372px" width="16" height="16" viewBox="0 0 16 16"><defs><linearGradient id="gsh" x1="0" y1="0" x2="1" y2="1"><stop offset="0" stop-color="#fff"/><stop offset="1" stop-color="#a8b8d8"/></linearGradient></defs><rect x="1.5" y="3.5" width="14" height="11" fill="url(#gsh)" stroke="#101010" stroke-width="1.3"/><rect x="3" y="1.5" width="6" height="3" fill="#ece9d8"/><rect x="2.5" y="1.5" width="3" height="3" fill="#3a6aa8"/><rect x="10.5" y="1.5" width="3" height="3" fill="#3a6aa8"/></svg><svg class="a" style="left:1259px;top:394px" width="16" height="16" viewBox="0 0 16 16"><path d="M0 8H16" stroke="#101010" stroke-width="1.6"/><path d="M3 3L8 8L3 13ZM13 3L8 8L13 13Z" fill="#3a6aa8"/></svg><svg class="a" style="left:1259px;top:416px" width="16" height="16" viewBox="0 0 16 16"><path d="M2 3V16" stroke="#101010" stroke-width="1.4"/><path d="M7 2H16" stroke="#101010" stroke-width="1.4"/><path d="M2 2H7M2 2V6" stroke="#404040" stroke-dasharray="1 1"/><path d="M2 8L8 2" stroke="#1a6ae0" stroke-width="1.6"/></svg><svg class="a" style="left:1259px;top:438px" width="16" height="16" viewBox="0 0 16 16"><path d="M2 8V16" stroke="#101010" stroke-width="1.4"/><path d="M8 2H16" stroke="#101010" stroke-width="1.4"/><path d="M2 2H7M2 2V6" stroke="#404040" stroke-dasharray="1 1"/><path d="M2 9C2 5 5 2 8 2" stroke="#1a6ae0" stroke-width="1.6" fill="none"/></svg><svg class="a" style="left:1259px;top:460px" width="16" height="16" viewBox="0 0 16 16"><path d="M1 10L10 4L13 7L5 15Z" fill="#d82020"/><path d="M3 6L5 9L1 8ZM6 12L9 14L6 16Z" fill="#f8e020"/><path d="M2 6L4 3L5 7M7 11L10 13" stroke="#f8d020" stroke-width="1.4"/><path d="M10 5L13 2M13 1L15 3M12 4L16 0" stroke="#c0c8e0" stroke-width="1"/></svg><div class="a" style="left:1255px;top:486px;width:25px;height:105px;border-left:1px solid #fff;border-top:1px solid #fff;border-right:1px solid #a8a490;border-bottom:1px solid #a8a490"></div><div class="a" style="left:1258px;top:489px;width:20px;height:3px;border-top:2px solid #fff;border-bottom:1px solid #b3ae98"></div><div class="a" style="left:1258px;top:493px;width:20px;height:3px;border-top:2px solid #fff;border-bottom:1px solid #b3ae98"></div><svg class="a" style="left:1259px;top:500px" width="16" height="16" viewBox="0 0 16 16"><rect x="0.5" y="0.5" width="7" height="7" fill="#f0f4fc" stroke="#5a80b8"/><rect x="3.5" y="3.5" width="8" height="8" fill="#5a80b8" stroke="#2a4a88"/><rect x="7.5" y="8.5" width="7" height="7" fill="#e0e8f4" stroke="#5a80b8"/></svg><svg class="a" style="left:1259px;top:522px" width="16" height="16" viewBox="0 0 16 16"><rect x="0.5" y="0.5" width="7" height="7" fill="#d8e4f4" stroke="#5a80b8"/><rect x="3.5" y="3.5" width="8" height="8" fill="#5a80b8" stroke="#2a4a88"/><rect x="7.5" y="8.5" width="7" height="7" fill="#d8e4f4" stroke="#5a80b8"/></svg><svg class="a" style="left:1259px;top:544px" width="16" height="16" viewBox="0 0 16 16"><rect x="7.5" y="5.5" width="8" height="9" fill="#e0e8f4" stroke="#5a80b8"/><rect x="1.5" y="1.5" width="10" height="9" fill="#5a80b8" stroke="#2a4a88"/></svg><svg class="a" style="left:1259px;top:566px" width="16" height="16" viewBox="0 0 16 16"><rect x="1.5" y="1.5" width="10" height="9" fill="#5a80b8" stroke="#2a4a88"/><rect x="5.5" y="5.5" width="10" height="10" fill="#e0e8f4" stroke="#5a80b8" opacity=".9"/></svg><div class="a" style="left:2px;top:893px;width:1224px;height:16px;background:#ECE9D8"></div><div class="a" style="left:2px;top:893px;width:18px;height:15px;border-top:1px solid #fff;border-left:1px solid #fff;border-right:1px solid #aca899;border-bottom:1px solid #aca899"></div><div class="a" style="left:20px;top:893px;width:18px;height:15px;border-top:1px solid #fff;border-left:1px solid #fff;border-right:1px solid #aca899;border-bottom:1px solid #aca899"></div><div class="a" style="left:38px;top:893px;width:18px;height:15px;border-top:1px solid #fff;border-left:1px solid #fff;border-right:1px solid #aca899;border-bottom:1px solid #aca899"></div><div class="a" style="left:56px;top:893px;width:18px;height:15px;border-top:1px solid #fff;border-left:1px solid #fff;border-right:1px solid #aca899;border-bottom:1px solid #aca899"></div><svg class="a" style="left:0;top:893px" width="76" height="15"><path d="M6.5 3V12" stroke="#000" stroke-width="1.2"/><path d="M13.5 3V12L8 7.5Z" fill="#000"/><path d="M31.5 3V12L26 7.5Z" fill="#000"/><path d="M44 3V12L49.5 7.5Z" fill="#000"/><path d="M62 3V12L67.5 7.5Z" fill="#000"/><path d="M68.8 3V12" stroke="#000" stroke-width="1.2"/></svg><svg class="a" style="left:0;top:0" width="200" height="912" viewBox="0 0 200 912"><path d="M77.5 892L131.5 892L128 908L82 908Z" fill="#000"/><path d="M78 892.5L82.5 907.5" stroke="#9a9a90" stroke-width="1"/><path d="M131.5 892.5L127.5 907.5" stroke="#9a9a90" stroke-width="1"/><path d="M135.5 892.5L131.5 907.5H178.5L182.5 892.5" fill="none" stroke="#000" stroke-width="1"/></svg><span class="a" style="left:85px;top:894px;color:#fff;font-size:11px;line-height:13px;letter-spacing:0.2px">Модель</span><span class="a" style="left:136px;top:894px;color:#000;font-size:11px;line-height:13px;letter-spacing:0.1px">Layout1</span><div class="a" style="left:0;top:909px;width:1280px;height:1px;background:#fff"></div><div class="a" style="left:0;top:914px;width:1280px;height:1px;background:#a8a490"></div><div class="a" style="left:0;top:915px;width:1280px;height:1px;background:#000"></div><div class="a" style="left:5px;top:923px;width:3px;height:42px;border-left:2px solid #fff;border-right:1px solid #b3ae98"></div><div class="a" style="left:9px;top:923px;width:3px;height:42px;border-left:2px solid #fff;border-right:1px solid #b3ae98"></div><div class="a" style="left:17px;top:926px;width:1256px;height:43px;background:#fff;border-left:1px solid #000;border-top:1px solid #000"></div><div class="a" style="left:18px;top:949px;width:1255px;height:1px;background:#aca899"></div><div class="a" style="left:1186px;top:950px;width:87px;height:19px;background:#ECE9D8"></div><div class="a" style="left:1273px;top:926px;width:7px;height:44px;background:#ECE9D8"></div><div class="a" style="left:18px;top:928px;white-space:nowrap;font-family:'Liberation Serif',serif;font-size:14px;line-height:15px"><span style="display:inline-block;width:8px;text-align:center;transform:scaleX(0.95)">К</span><span style="display:inline-block;width:8px;text-align:center;transform:scaleX(0.95)">о</span><span style="display:inline-block;width:8px;text-align:center;transform:scaleX(0.95)">м</span><span style="display:inline-block;width:8px;text-align:center;transform:scaleX(0.95)">а</span><span style="display:inline-block;width:8px;text-align:center;transform:scaleX(0.95)">н</span><span style="display:inline-block;width:8px;text-align:center;transform:scaleX(0.95)">д</span><span style="display:inline-block;width:8px;text-align:center;transform:scaleX(0.95)">а</span><span style="display:inline-block;width:8px;text-align:center;transform:scaleX(0.95)">:</span><span style="display:inline-block;width:8px;text-align:center;transform:scaleX(0.95)">&nbsp;</span><span style="display:inline-block;width:8px;text-align:center;transform:scaleX(0.95)">*</span><span style="display:inline-block;width:8px;text-align:center;transform:scaleX(0.95)">П</span><span style="display:inline-block;width:8px;text-align:center;transform:scaleX(0.95)">р</span><span style="display:inline-block;width:8px;text-align:center;transform:scaleX(0.95)">е</span><span style="display:inline-block;width:8px;text-align:center;transform:scaleX(0.95)">р</span><span style="display:inline-block;width:8px;text-align:center;transform:scaleX(0.95)">в</span><span style="display:inline-block;width:8px;text-align:center;transform:scaleX(0.95)">а</span><span style="display:inline-block;width:8px;text-align:center;transform:scaleX(0.95)">н</span><span style="display:inline-block;width:8px;text-align:center;transform:scaleX(0.95)">о</span><span style="display:inline-block;width:8px;text-align:center;transform:scaleX(0.95)">*</span></div><div class="a" style="left:18px;top:952px;white-space:nowrap;font-family:'Liberation Serif',serif;font-size:14px;line-height:15px"><span style="display:inline-block;width:8px;text-align:center;transform:scaleX(0.95)">К</span><span style="display:inline-block;width:8px;text-align:center;transform:scaleX(0.95)">о</span><span style="display:inline-block;width:8px;text-align:center;transform:scaleX(0.95)">м</span><span style="display:inline-block;width:8px;text-align:center;transform:scaleX(0.95)">а</span><span style="display:inline-block;width:8px;text-align:center;transform:scaleX(0.95)">н</span><span style="display:inline-block;width:8px;text-align:center;transform:scaleX(0.95)">д</span><span style="display:inline-block;width:8px;text-align:center;transform:scaleX(0.95)">а</span><span style="display:inline-block;width:8px;text-align:center;transform:scaleX(0.95)">:</span></div><div class="a" style="left:1257px;top:928px;width:14px;height:11px;border-radius:2px;border:1px solid #fff;background:linear-gradient(160deg,#dbe5fb,#b6cbf8 60%,#a8c0f5)"><svg class="a" style="left:0;top:0" width="14" height="11"><path d="M3.5 7L6.5 4L9.5 7" stroke="#4d6185" stroke-width="2" fill="none"/></svg></div><div class="a" style="left:1257px;top:939px;width:14px;height:11px;border-radius:2px;border:1px solid #fff;background:linear-gradient(160deg,#dbe5fb,#b6cbf8 60%,#a8c0f5)"><svg class="a" style="left:0;top:0" width="14" height="11"><path d="M3.5 3L6.5 6L9.5 3" stroke="#4d6185" stroke-width="2" fill="none"/></svg></div><div class="a" style="left:1189px;top:951px;width:64px;height:16px;background:#f6f5f0"></div><div class="a" style="left:1189px;top:951px;width:15px;height:16px;border-radius:2px;border:1px solid #fff;background:linear-gradient(160deg,#dbe5fb,#b6cbf8 60%,#a8c0f5)"><svg class="a" style="left:0;top:0" width="15" height="16"><path d="M9 3.5L5 7.5L9 11.5" stroke="#4d6185" stroke-width="2" fill="none"/></svg></div><div class="a" style="left:1205px;top:951px;width:15px;height:16px;border-radius:2px;border:1px solid #fff;background:linear-gradient(160deg,#dbe5fb,#b6cbf8 60%,#a8c0f5)"><svg class="a" style="left:0;top:0" width="15" height="16"><path d="M3.5 4V12M5.5 4V12M7.5 4V12M9.5 4V12" stroke="#fff" stroke-width="1"/><path d="M4.5 4V12M6.5 4V12M8.5 4V12M10.5 4V12" stroke="#8ca4e0" stroke-width="1"/></svg></div><div class="a" style="left:1238px;top:951px;width:15px;height:16px;border-radius:2px;border:1px solid #fff;background:linear-gradient(160deg,#dbe5fb,#b6cbf8 60%,#a8c0f5)"><svg class="a" style="left:0;top:0" width="15" height="16"><path d="M5 3.5L9 7.5L5 11.5" stroke="#4d6185" stroke-width="2" fill="none"/></svg></div><div class="a" style="left:0;top:969px;width:1280px;height:1px;background:#fff"></div><div class="a" style="left:0;top:971px;width:1280px;height:1px;background:#b8b4a2"></div><div class="a" style="left:5px;top:975px;width:177px;height:18px;border-top:1px solid #aca899;border-left:1px solid #aca899;border-right:1px solid #fff;border-bottom:1px solid #fff"></div><span class="a" style="left:8px;top:978px;font-size:11px;line-height:14px;letter-spacing:-0.05px;white-space:pre">499.8550, 673.0983, 0.0000</span><div class="sb up" style="left:186px;width:26px"><span style="display:inline-block;transform:scaleX(0.87);transform-origin:0 0;position:absolute;left:2px;top:2px">ШАГ</span></div><div class="sb up" style="left:216px;width:39px"><span style="display:inline-block;transform:scaleX(0.87);transform-origin:0 0;position:absolute;left:2px;top:2px">СЕТКА</span></div><div class="sb dn" style="left:259px;width:34px"><span style="display:inline-block;transform:scaleX(0.87);transform-origin:0 0;position:absolute;left:2px;top:2px">ОРТО</span></div><div class="sb up" style="left:297px;width:68px"><span style="display:inline-block;transform:scaleX(0.87);transform-origin:0 0;position:absolute;left:2px;top:2px">ОТС-ПОЛЯР</span></div><div class="sb dn" style="left:369px;width:63px"><span style="display:inline-block;transform:scaleX(0.87);transform-origin:0 0;position:absolute;left:2px;top:2px">ПРИВЯЗКА</span></div><div class="sb up" style="left:436px;width:73px"><span style="display:inline-block;transform:scaleX(0.87);transform-origin:0 0;position:absolute;left:2px;top:2px">ОТС-ОБЪЕКТ</span></div><div class="sb dn" style="left:513px;width:35px"><span style="display:inline-block;transform:scaleX(0.87);transform-origin:0 0;position:absolute;left:2px;top:2px">ДПСК</span></div><div class="sb dn" style="left:552px;width:29px"><span style="display:inline-block;transform:scaleX(0.87);transform-origin:0 0;position:absolute;left:2px;top:2px">ДИН</span></div><div class="sb up" style="left:585px;width:25px"><span style="display:inline-block;transform:scaleX(0.87);transform-origin:0 0;position:absolute;left:2px;top:2px">ВЕС</span></div><div class="sb dn" style="left:614px;width:52px"><span style="display:inline-block;transform:scaleX(0.87);transform-origin:0 0;position:absolute;left:2px;top:2px">МОДЕЛЬ</span></div><div class="a" style="left:1154px;top:975px;width:84px;height:19px;background:#f7f6f0;border-top:1px solid #d8d4c4;border-left:1px solid #d8d4c4"></div><svg class="a" style="left:1158px;top:976px" width="16" height="16" viewBox="0 0 16 16"><path d="M3 1C0 5 2 10 6 12" stroke="#6a7ab8" stroke-width="1.6" fill="none"/><path d="M6 1L10 5" stroke="#6a7ab8" stroke-width="1.4"/><path d="M5 9L12 16H0Z" fill="#f0c820" stroke="#806810" stroke-width="0.7"/><path d="M6 11V14" stroke="#000" stroke-width="1.3"/></svg><svg class="a" style="left:1177px;top:976px" width="16" height="16" viewBox="0 0 16 16"><path d="M8 8V4C8 1 14 1 14 4V6" stroke="#1a1a1a" stroke-width="1.8" fill="none"/><path d="M8 8V4C8 1 14 1 14 4V6" stroke="#e8c020" stroke-width="0.8" fill="none"/><rect x="1" y="8" width="10" height="8" rx="1" fill="#d0a810" stroke="#4a3a08" stroke-width="0.8"/><path d="M1 10H11M1 12H11M1 14H11" stroke="#f8e060" stroke-width="0.8"/></svg><svg class="a" style="left:1198px;top:976px" width="16" height="16" viewBox="0 0 16 16"><path d="M1 4C3 1 7 1 9 3" stroke="#8a9ac8" stroke-width="1.6" fill="none"/><circle cx="4" cy="7" r="3" fill="#b8c4e0"/><path d="M9 6L15 15H3Z" fill="#f0c820" stroke="#806810" stroke-width="0.7"/><path d="M9 9V12" stroke="#000" stroke-width="1.3"/></svg><svg class="a" style="left:1218px;top:976px" width="16" height="16" viewBox="0 0 16 16"><rect x="1" y="2" width="10" height="13" fill="#3a5a88"/><path d="M4 3V15M1 7H7" stroke="#fff" stroke-width="1"/><circle cx="12" cy="12" r="4" fill="#20a020"/><path d="M10 12L12 14L14.5 10" stroke="#fff" stroke-width="1.3" fill="none"/></svg><svg class="a" style="left:1241px;top:985px" width="10" height="6"><path d="M0 0H9L4.5 5Z" fill="#000"/></svg><div class="a" style="left:1260px;top:975px;width:17px;height:17px;border:2px solid #1a4a88;background:linear-gradient(135deg,#dbe8f8,#9ab8e0)"><div class="a" style="left:1px;top:1px;width:11px;height:11px;border:1px solid #fff"></div></div><div class="a" style="left:0;top:994px;width:1280px;height:4px;background:linear-gradient(#3a8af8,#2a6ae8)"></div><div class="a" style="left:0;top:994px;width:92px;height:4px;background:linear-gradient(#48a848,#38983a);border-top-right-radius:6px"></div><div class="a" style="left:1169px;top:994px;width:111px;height:4px;background:linear-gradient(#1aa0f0,#0e90e8);border-left:1px solid #0a5ac8"></div></body></html>
